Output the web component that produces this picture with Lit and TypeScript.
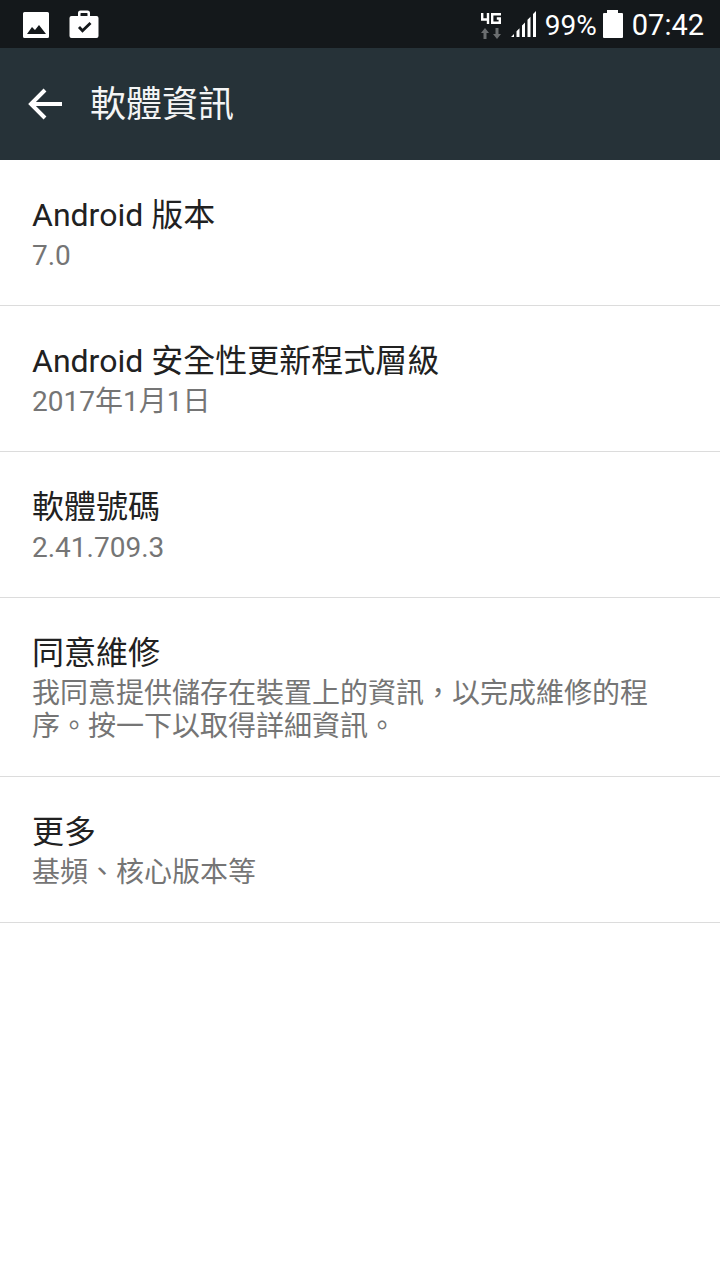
import { LitElement, html, css } from "lit";
import { customElement } from "lit/decorators.js";

const rows = [
  { title: "Android 版本", summary: "7.0" },
  { title: "Android 安全性更新程式層級", summary: "2017年1月1日" },
  { title: "軟體號碼", summary: "2.41.709.3" },
  { title: "同意維修", summary: "我同意提供儲存在裝置上的資訊，以完成維修的程序。按一下以取得詳細資訊。" },
  { title: "更多", summary: "基頻、核心版本等" },
];

@customElement("app-root")
export class AppRoot extends LitElement {
  static styles = css`
    :host {
      display: block;
      width: 720px;
      min-height: 1280px;
      background: #fff;
      font-family: Roboto, "Noto Sans CJK TC", sans-serif;
    }
    .status {
      height: 48px;
      background: #14181b;
      display: flex;
      align-items: center;
      color: #fff;
      padding: 0 16px 0 23px;
    }
    .notif {
      display: flex;
      gap: 20px;
      align-items: center;
      flex: 1;
    }
    .status svg {
      display: block;
    }
    .tray {
      display: flex;
      align-items: center;
    }
    .signal {
      margin-left: 9px;
    }
    .pct {
      font-size: 28px;
      margin-left: 8px;
      padding-top: 2px;
    }
    .batt {
      margin-left: 6px;
    }
    .clock {
      font-size: 29px;
      margin-left: 9px;
      padding-top: 2px;
    }
    .bar {
      height: 112px;
      background: #263238;
      display: flex;
      align-items: center;
      color: #fff;
      padding-left: 27px;
    }
    .bar h1 {
      margin: 0 0 0 27px;
      padding-top: 2px;
      font-size: 36px;
      font-weight: 400;
      line-height: 48px;
      color: #f4f5f5;
    }
    .row {
      padding: 32px 72px 33px 32px;
      border-bottom: 1px solid #dcdcdc;
    }
    .title {
      font-size: 32px;
      line-height: 47px;
      color: #212121;
    }
    .summary {
      font-size: 28px;
      line-height: 33px;
      color: #757575;
    }
  `;

  render() {
    return html`
      <div class="status">
        <div class="notif">
          <svg width="26" height="28" viewBox="0 0 26 28">
            <path fill="#fff" fill-rule="evenodd" d="M1.500 2h23A1.500 1.500 0 0 1 26 3.500v23a1.500 1.500 0 0 1-1.500 1.500h-23A1.500 1.500 0 0 1 0 26.500v-23A1.500 1.500 0 0 1 1.500 2ZM4 24h19l-7-9-4 5-3-3Z" />
          </svg>
          <svg width="30" height="30" viewBox="0 0 30 30">
            <path fill="#fff" fill-rule="evenodd" d="M9 7V4a2.500 2.500 0 0 1 2.500-2.500h7A2.500 2.500 0 0 1 21 4v3h6.500a2 2 0 0 1 2 2v18a2 2 0 0 1-2 2h-25a2 2 0 0 1-2-2V9a2 2 0 0 1 2-2ZM11.500 7h7V4.500a.5.500 0 0 0-.5-.5h-6a.5.500 0 0 0-.5.5Z" />
            <path fill="none" stroke="#14181b" stroke-width="2.800" d="M10 18l3.500 3.800L21.500 14" />
          </svg>
        </div>
        <div class="tray">
          <svg width="24" height="30" viewBox="0 0 24 30">
            <path fill="none" stroke="#fff" stroke-width="2.400" d="M4.200 4v6.500h7M10 4v11M23 5.200h-8.800v8.600h7.600V9.500h-3" />
            <path fill="#6b6e70" d="M7 19l4 5H8.500v6h-3v-6H3ZM19 30l-4-5h2.500v-6h3v6H23Z" />
          </svg>
          <svg class="signal" width="26" height="28" viewBox="0 0 26 28">
            <path fill="#fff" d="M0 27l3-3v3ZM5.500 21.300l3-3V27h-3ZM11 15.600l3-3.200V27h-3ZM16.500 9.800l3-3.100V27h-3ZM22 4.100 25 1v26h-3Z" />
          </svg>
          <span class="pct">99%</span>
          <svg class="batt" width="20" height="28" viewBox="0 0 20 28">
            <path fill="#fff" d="M4 0h11v3h4a1 1 0 0 1 1 1v23a1 1 0 0 1-1 1H1a1 1 0 0 1-1-1V4a1 1 0 0 1 1-1h3Z" />
          </svg>
          <span class="clock">07:42</span>
        </div>
      </div>
      <div class="bar">
        <svg width="36" height="36" viewBox="0 0 36 36">
          <path fill="none" stroke="#fff" stroke-width="4" d="M35 18H5M18 4 4 18l14 14" />
        </svg>
        <h1 lang="zh-TW">軟體資訊</h1>
      </div>
      ${rows.map(
        (r) => html`
          <div class="row" lang="zh-TW">
            <div class="title">${r.title}</div>
            <div class="summary">${r.summary}</div>
          </div>
        `
      )}
    `;
  }
}
